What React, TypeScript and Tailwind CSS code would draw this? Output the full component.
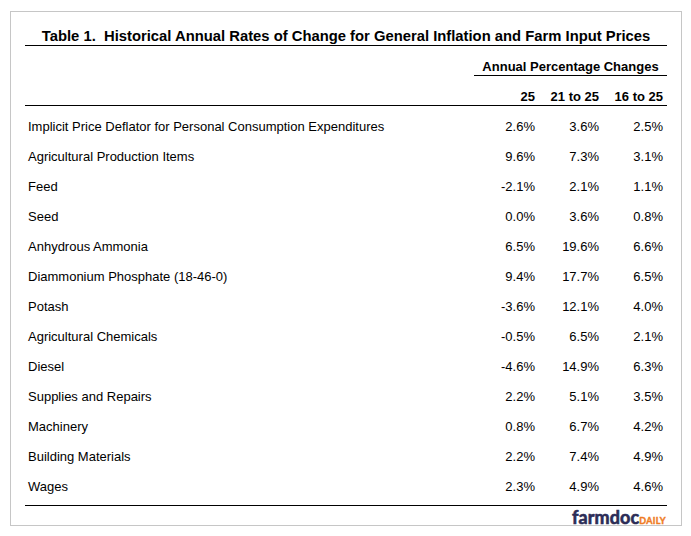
const rows: [string, string, string, string][] = [
  ["Implicit Price Deflator for Personal Consumption Expenditures", "2.6%", "3.6%", "2.5%"],
  ["Agricultural Production Items", "9.6%", "7.3%", "3.1%"],
  ["Feed", "-2.1%", "2.1%", "1.1%"],
  ["Seed", "0.0%", "3.6%", "0.8%"],
  ["Anhydrous Ammonia", "6.5%", "19.6%", "6.6%"],
  ["Diammonium Phosphate (18-46-0)", "9.4%", "17.7%", "6.5%"],
  ["Potash", "-3.6%", "12.1%", "4.0%"],
  ["Agricultural Chemicals", "-0.5%", "6.5%", "2.1%"],
  ["Diesel", "-4.6%", "14.9%", "6.3%"],
  ["Supplies and Repairs", "2.2%", "5.1%", "3.5%"],
  ["Machinery", "0.8%", "6.7%", "4.2%"],
  ["Building Materials", "2.2%", "7.4%", "4.9%"],
  ["Wages", "2.3%", "4.9%", "4.6%"],
];

const cols = "grid grid-cols-[1fr_60px_64px_68px]";

export default function App() {
  return (
    <div className="w-[691px] h-[536px] bg-white pt-[11px] pl-[10px] font-['Liberation_Sans',Arial,sans-serif] text-black">
      <div className="w-[672px] h-[515px] border border-[#c6c6c6] px-[14px] flex flex-col">
        {/* title */}
        <div className="pt-[15px] leading-[18px] text-[14.8px] font-bold text-center border-b border-black">
          Table 1.&nbsp; Historical Annual Rates of Change for General Inflation and Farm Input Prices
        </div>

        {/* group header */}
        <div className="flex justify-end">
          <div className="w-[193px] mt-[13px] leading-[16px] text-[13px] font-bold text-center border-b border-black">
            Annual Percentage Changes
          </div>
        </div>

        {/* column header */}
        <div className={`${cols} mt-[13px] leading-[16px] text-[13px] font-bold border-b border-black`}>
          <div />
          <div className="text-right">25</div>
          <div className="text-right">21 to 25</div>
          <div className="text-right pr-[4px]">16 to 25</div>
        </div>

        {/* data */}
        <div className="mt-[6px] text-[13px]">
          {rows.map((r) => (
            <div key={r[0]} className={`${cols} h-[30px] items-center`}>
              <div className="pl-[3px]">{r[0]}</div>
              <div className="text-right">{r[1]}</div>
              <div className="text-right">{r[2]}</div>
              <div className="text-right pr-[4px]">{r[3]}</div>
            </div>
          ))}
        </div>

        <div className="mt-[3px] border-b border-black" />

        {/* logo */}
        <div className="flex justify-end items-baseline pt-[2px] pr-[1px] leading-[18px] font-['Lato',sans-serif]">
          <span className="text-[18px] font-bold text-[#2c2d57] tracking-[0.1px] [-webkit-text-stroke:0.6px_#2c2d57]">farmdoc</span>
          <span className="text-[9px] font-bold text-[#ef7b23] tracking-[0.3px] [-webkit-text-stroke:0.4px_#ef7b23]">DAILY</span>
        </div>
      </div>
    </div>
  );
}
